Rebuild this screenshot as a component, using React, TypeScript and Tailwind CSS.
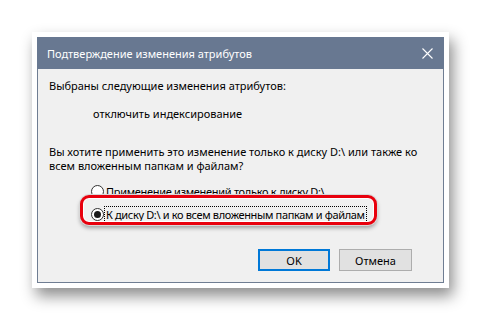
import React from "react";

export default function App() {
  const font = { fontFamily: '"Noto Sans", "Open Sans", sans-serif' };
  return (
    <div className="relative w-[481px] h-[321px] bg-white pl-[32px] pt-[32px]" style={font}>
      <div className="w-[417px] p-[5px] bg-white shadow-[4px_8px_14px_rgba(0,0,0,0.45)]">
        <div className="w-[407px] h-[246px] flex flex-col">
          <div className="h-[32px] bg-[#687891] flex items-center justify-between pl-[10px] pr-[11px]">
            <span className="text-white text-[11px] leading-[15px]">Подтверждение изменения атрибутов</span>
            <svg width="11" height="11" viewBox="0 0 11 11">
              <path d="M0.5 0.5 L10.5 10.5 M10.5 0.5 L0.5 10.5" stroke="white" strokeWidth="1.1" fill="none" />
            </svg>
          </div>
          <div className="flex-1 bg-[#f0f0f0] border-x border-b border-[#6f7d92] flex flex-col pl-[11px] pt-[9px] text-[11px] text-black">
            <div className="leading-[15px] whitespace-nowrap">Выбраны следующие изменения атрибутов:</div>
            <div className="leading-[15px] mt-[13px] pl-[44px] whitespace-nowrap">отключить индексирование</div>
            <div className="leading-[14px] mt-[24px] whitespace-nowrap">
              Вы хотите применить это изменение только к диску D:\ или также ко
              <br />
              всем вложенным папкам и файлам?
            </div>
            <div className="mt-[11px] pl-[42px] flex items-center h-[15px] gap-[2px]">
              <span className="w-[13px] h-[13px] rounded-full border border-[#333] bg-white"></span>
              <span className="leading-[15px] whitespace-nowrap tracking-[-0.3px]">Применение изменений только к диску D:\</span>
            </div>
            <div className="mt-[8px] pl-[42px] flex items-center h-[15px] gap-[1px]">
              <span className="w-[13px] h-[13px] rounded-full border border-[#333] bg-white flex items-center justify-center">
                <span className="w-[7px] h-[7px] rounded-full bg-[#1a1a1a]"></span>
              </span>
              <span className="leading-[15px] px-[1px] outline-1 outline-dotted outline-black whitespace-nowrap tracking-[-0.35px]">К диску D:\ и ко всем вложенным папкам и файлам</span>
            </div>
            <div className="mt-[27px] flex justify-end gap-[9px] pr-[31px]">
              <button className="w-[72px] h-[22px] bg-[#e1e1e1] border-2 border-[#0078d7] text-[11px] leading-[15px] flex items-center justify-center">OK</button>
              <button className="w-[73px] h-[22px] bg-[#e1e1e1] border border-[#adadad] text-[11px] leading-[15px] flex items-center justify-center">Отмена</button>
            </div>
          </div>
        </div>
      </div>
      <div className="absolute left-[80px] top-[195px] w-[297px] h-[30px] rounded-[9px] border-[3px] border-[#e8000d] shadow-[0_0_0_1px_#d8d8d8,0_3px_4px_rgba(0,0,0,0.35),inset_0_0_0_1px_white]"></div>
    </div>
  );
}
